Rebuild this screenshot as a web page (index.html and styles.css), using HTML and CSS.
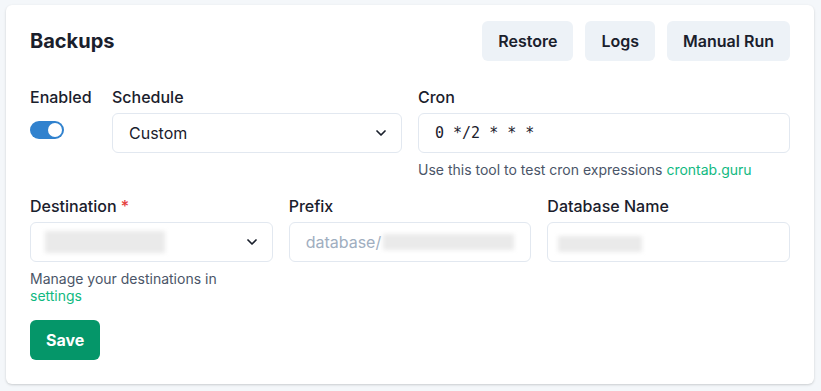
FILE: index.html
```html
<!DOCTYPE html>
<html lang="en">
<head>
  <meta charset="UTF-8">
  <meta name="viewport" content="width=device-width, initial-scale=1">
  <title>Backups</title>
  <link rel="stylesheet" href="styles.css">
</head>
<body>
  <div class="card">
    <div class="card-header">
      <h2 class="card-title">Backups</h2>
      <div class="actions">
        <button class="btn btn-gray">Restore</button>
        <button class="btn btn-gray">Logs</button>
        <button class="btn btn-gray">Manual Run</button>
      </div>
    </div>

    <div class="row row-two">
      <div class="pair">
        <div class="field field-toggle">
          <label class="label">Enabled</label>
          <span class="switch"><span class="thumb"></span></span>
        </div>
        <div class="field field-grow">
          <label class="label">Schedule</label>
          <div class="select">
            <span class="select-value">Custom</span>
            <svg class="chevron" viewBox="0 0 24 24" width="16" height="16"><path d="M6 9l6 6 6-6" fill="none" stroke="currentColor" stroke-width="2.6" stroke-linecap="round" stroke-linejoin="round"/></svg>
          </div>
        </div>
      </div>
      <div class="field">
        <label class="label">Cron</label>
        <div class="input input-mono">0 */2 * * *</div>
        <p class="helper">Use this tool to test cron expressions <a href="#" class="link">crontab.guru</a></p>
      </div>
    </div>

    <div class="row row-three">
      <div class="field">
        <label class="label">Destination <span class="required">*</span></label>
        <div class="select">
          <span class="blur blur-dest"></span>
          <svg class="chevron" viewBox="0 0 24 24" width="16" height="16"><path d="M6 9l6 6 6-6" fill="none" stroke="currentColor" stroke-width="2.6" stroke-linecap="round" stroke-linejoin="round"/></svg>
        </div>
        <p class="helper">Manage your destinations in<br><a href="#" class="link">settings</a></p>
      </div>
      <div class="field">
        <label class="label">Prefix</label>
        <div class="input input-placeholder">database/<span class="blur blur-prefix"></span></div>
      </div>
      <div class="field">
        <label class="label">Database Name</label>
        <div class="input"><span class="blur blur-db"></span></div>
      </div>
    </div>

    <button class="btn btn-save">Save</button>
  </div>
</body>
</html>
```

FILE: styles.css
```css
body {
  margin: 0;
  padding: 5px 7px 7px 6px;
  background-color: #f4f7fa;
  font-family: 'Inter', 'Liberation Sans', sans-serif;
  color: #1a202c;
}

.card {
  background-color: #ffffff;
  border-radius: 6px;
  padding: 16px 24px 24px;
  box-shadow: 0 1px 3px rgba(0, 0, 0, 0.12), 0 1px 2px rgba(0, 0, 0, 0.06);
}

.card-header {
  display: flex;
  align-items: center;
  justify-content: space-between;
  margin-bottom: 24px;
}

.card-title {
  margin: 0;
  font-size: 20px;
  font-weight: 700;
  line-height: 28px;
}

.actions {
  display: flex;
  gap: 12px;
}

.btn {
  height: 40px;
  padding: 0 16px;
  border: none;
  border-radius: 6px;
  font-family: inherit;
  font-size: 16px;
  font-weight: 600;
  cursor: pointer;
}

.btn-gray {
  background-color: #edf2f7;
  color: #1a202c;
}

.btn-save {
  margin-top: 16px;
  background-color: #059669;
  color: #ffffff;
  font-weight: 700;
}

.row {
  display: grid;
  gap: 16px;
}

.row + .row {
  margin-top: 16px;
}

.row-two {
  grid-template-columns: 1fr 1fr;
}

.row-three {
  grid-template-columns: 1fr 1fr 1fr;
}

.pair {
  display: flex;
  gap: 16px;
}

.field {
  display: flex;
  flex-direction: column;
  min-width: 0;
}

.field-toggle {
  width: 66px;
}

.field-grow {
  flex: 1;
}

.label {
  font-size: 16px;
  font-weight: 500;
  line-height: 24px;
  margin-bottom: 4px;
}

.required {
  color: #e53e3e;
}

.switch {
  display: flex;
  align-items: center;
  width: 34px;
  height: 18px;
  margin-top: 8px;
  padding: 2px;
  box-sizing: border-box;
  border-radius: 9px;
  background-color: #3182ce;
  justify-content: flex-end;
}

.thumb {
  width: 14px;
  height: 14px;
  border-radius: 50%;
  background-color: #ffffff;
}

.select,
.input {
  display: flex;
  align-items: center;
  height: 40px;
  box-sizing: border-box;
  padding: 0 16px;
  border: 1px solid #e2e8f0;
  border-radius: 6px;
  font-size: 16px;
  overflow: hidden;
  white-space: nowrap;
}

.select {
  justify-content: space-between;
  padding-right: 12px;
}

.chevron {
  color: #1a202c;
  flex-shrink: 0;
}

.input-mono {
  font-family: 'DejaVu Sans Mono', monospace;
  font-size: 15px;
}

.input-placeholder {
  color: #a0aec0;
}

.helper {
  margin: 8px 0 0;
  font-size: 14px;
  line-height: 17px;
  color: #4a5568;
}

.link {
  color: #10b981;
  text-decoration: none;
}

/* blurred-out private values */
.blur {
  display: inline-block;
  background-color: #eaeaea;
  filter: blur(2px);
}

.blur-dest {
  width: 120px;
  height: 22px;
  margin-left: -2px;
}

.blur-prefix {
  width: 132px;
  height: 16px;
  margin-left: 2px;
}

.blur-db {
  width: 84px;
  height: 16px;
  margin-left: -6px;
  margin-top: 4px;
}
```
